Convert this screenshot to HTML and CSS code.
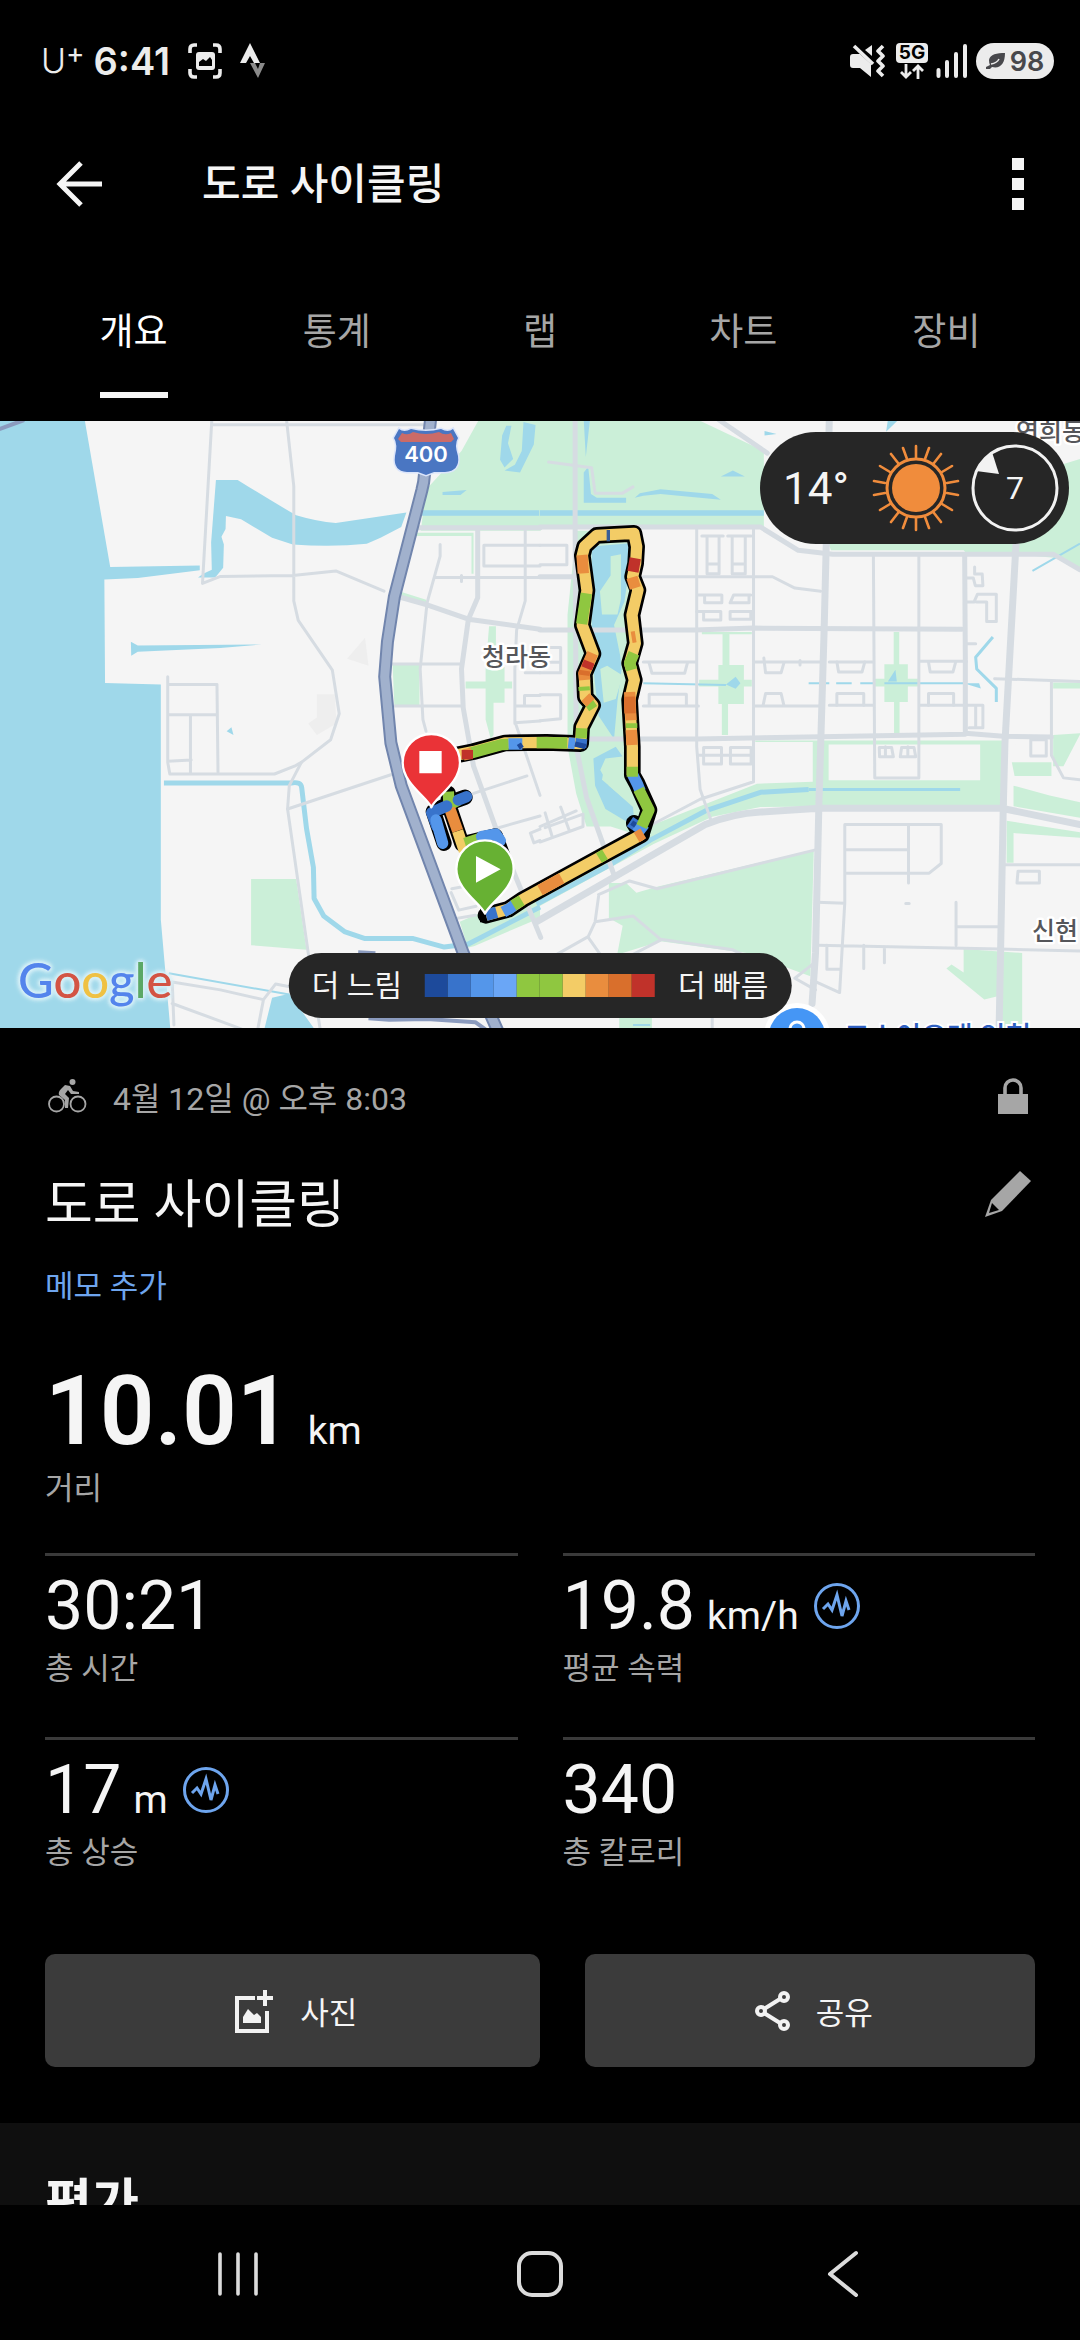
FILE: index.html
```html
<!DOCTYPE html>
<html lang="ko">
<head>
<meta charset="utf-8">
<meta name="viewport" content="width=device-width, initial-scale=1">
<title>도로 사이클링</title>
<link rel="stylesheet" href="styles.css">
</head>
<body>
<div class="screen">
  <div class="status">
    <div class="status-left">
      <span class="carrier">U<span class="carrier-plus">+</span></span>
      <span class="clock">6:41</span>
      <svg class="icon-capture" width="34" height="36" viewBox="0 0 34 36" fill="none">
        <path d="M2 10V6q0-4 4-4h3M25 2h3q4 0 4 4v4M32 26v4q0 4-4 4h-3M9 34H6q-4 0-4-4v-4" stroke="#ececec" stroke-width="3.6"/>
        <rect x="8" y="9" width="19" height="18" rx="3" fill="#ececec"/>
        <path d="M11 23v-4l4-3 3 2 4-4 2 3v6z" fill="#000"/>
      </svg>
      <svg width="26" height="36" viewBox="0 0 26 36">
        <path d="M10 0 20 20h-6l-4-7-4 7H0z" fill="#ececec"/>
        <path d="M10 20h5l3 6 2-6h5l-7 15z" fill="#8a8a8a"/>
      </svg>
    </div>
    <div class="status-right">
      <svg width="36" height="34" viewBox="0 0 36 34">
        <path d="M1 13q0-3 3-3h7l11 10v13L11 24H4q-3 0-3-3z" fill="#ececec"/>
        <path d="M16 6l7-5v11z" fill="#ececec"/>
        <path d="M5 2 24 20" stroke="#ececec" stroke-width="3.6"/>
        <path d="M34 2l-5 5 5 5-5 5 5 5-5 5 5 5" fill="none" stroke="#ececec" stroke-width="3.6" stroke-linejoin="round"/>
      </svg>
      <div class="network">
        <span class="network-type">5G</span>
        <svg width="24" height="15" viewBox="0 0 24 15" fill="none" stroke="#ececec" stroke-width="2.8">
          <path d="M6 0v13M1 8l5 5 5-5M18 15V2M13 7l5-5 5 5"/>
        </svg>
      </div>
      <svg width="32" height="36" viewBox="0 0 32 36" stroke="#ececec" stroke-width="4" stroke-linecap="round">
        <path d="M2.500 27v6M11 19v14M20 11v22M29 3v30"/>
      </svg>
      <div class="battery">
        <svg width="20" height="17" viewBox="0 0 20 17"><path d="M19 0C11 0 4 1 3 7q0 3 1 5l-4 2v2h4l2-2c8 2 13-3 13-14z" fill="#48484c"/><path d="M5 11q6-1 8-5" stroke="#ececec" stroke-width="1.500" fill="none"/></svg>
        <span>98</span>
      </div>
    </div>
  </div>

  <header class="appbar">
    <button class="icon-button" aria-label="뒤로">
      <svg width="48" height="48" viewBox="0 0 48 48" fill="none" stroke="#f5f5f5" stroke-width="5"><path d="M25 3 4 24l21 21M4 24h42"/></svg>
    </button>
    <h1 class="appbar-title">도로 사이클링</h1>
    <button class="icon-button" aria-label="더보기">
      <svg width="12" height="52" viewBox="0 0 12 52" fill="#f5f5f5"><path d="M0 0h12v12H0zM0 20h12v12H0zM0 40h12v12H0z"/></svg>
    </button>
  </header>

  <nav class="tabs">
    <a class="tab tab-active" href="#overview"><span>개요</span></a>
    <a class="tab" href="#stats"><span>통계</span></a>
    <a class="tab" href="#laps"><span>랩</span></a>
    <a class="tab" href="#charts"><span>차트</span></a>
    <a class="tab" href="#gear"><span>장비</span></a>
  </nav>

  <main class="content" id="overview">
    <section class="map">
      <svg class="map-canvas" viewBox="0 0 1080 607" preserveAspectRatio="xMidYMid slice">
        <defs>
          <path id="drop" d="M0 134C-12 104-86 62-86 0A86 86 0 1 1 86 0C86 62 12 104 0 134Z"/>
        </defs>
        <rect width="1080" height="607" fill="#f5f5f5"/>

        <!-- west side: parks and water -->
        <g transform="translate(0 -1) scale(.3444 .389)">
          <g class="park">
            <path d="M1390 0h180v285h-348l14-105 104-100z"/>
            <path d="M729 1180h131l30 182-161-12zM1140 630h78v105h-73zM1352 672h58V640l10-110h20v105h25v37h22v18h-22v37h-32v83l-8 10-15-50v-80h-58z"/>
            <path d="M1335 1290 1568 1200v80l-190 72-20 5z"/>
            <path d="M1200 290h175v105h-6v-97h-160l-50 142 78 22v8l-90-18z"/>
          </g>
          <g class="water">
            <path d="M0 0h246l74 378 260-4v12l-180 20-97 4 2 266 162 4v605l28 285H0z"/>
            <path d="M627 154h63q90 50 170 91 60 16 115 20l205-27-15 37-60 28-40 15q-100 10-215 2l-60-17-90-48-44-8-1 33-12 20 7 20-2 60-23 25h-50l15-10 25-10-2-70z"/>
            <path d="M380 570l20 10 360-3-120 9-240 10-19 10zM658 800l14-10 6 20zM790 1485l50-10 75 93H767z"/>
            <path d="M1225 232h345v14h-345zM1470 15h15l-10 45 15 40-25 22-13-20 6-62zM1520 5l35 8-5 50-40 72-45-5 30-15 20-35zM1285 185l70-5-18 13h-52z"/>
          </g>
          <g fill="#eeeeee"><path d="M1060 560l10 72-62-18zM920 705h52l5 75-57 30-25-30 25-15z"/></g>
          <path class="canal w4" d="M476 933h370q28-4 30 12l14 105 20 100 2 80 28 45 60 40 60 18h140l90 22 70-8 208-95"/>
          <path class="canal w2" d="M490 1422l350 55"/>
        </g>

        <!-- east side: parks and water -->
        <g transform="translate(540 -1) scale(.3444 .389)">
          <g class="park">
            <path d="M-2 0h462l190 80v195l-652-5zM830 300 1568 100v290l-68-35-120-10h-140l-10-10H845z"/>
            <path d="M105 285h180v45l-20 300v290l60 100-30 50-90-25-70 0-30-85-25-120V500z"/>
            <path d="M330 1040 630 935l162-5V828H625v-4h730v166l-715 5-140 25-170 70L-2 1250v-30z"/>
            <path d="M200 1190h50l30 25 60-15 455-95-10 325-185-60-250-30-110 30h-15l15-70-40-20z"/>
            <path d="M1370 880h115v35h-107zM1375 940l105 25 90 18v40l-195-30zM1490 810l80-5-50 85h-30zM1355 1030l213 30v14l-193-12v76h-20zM1490 675h80v15h-80z"/>
            <path d="M1180 1410l15-10 35 20v-60l170 10v200h-65v-90l-45 10zM230 1480h95v90h-95z"/>
            <path d="M530 548h20v82h42v100h-46v80h-18v-80h-10V630h12zM462 668h153v17H462zM470 545h145v6H470zM1027 545h16v83h25v97h-24v80h-16v-80h-28v-97h27zM970 665h130v20H970z"/>
          </g>
          <g fill="#f5f5f5"><path d="M628 834h160v92H628zM838 834h440v92H838zM1380 825h105v54h-105z"/></g>
          <g class="water">
            <path d="M0 232h650v14H0zM127 0h18l-12 95zM127 135l13-15 8 70 17 10h85v13H127zM275 200l15-12 60-10 150 12 25 15-175-15-50 5zM385 65l45 5zM525 145l35-15 35 15zM510 45l35 12zM652 28l35 8-35 4zM1010 0h30l-35 30z"/>
            <path d="M150 325l110-8-5 90-10 60-30 60 18 80 4 35-12 80-10 98-45-60-5-40-15-120z"/>
            <path d="M155 870l65-30 20 25-50 5-15 30 25 40 70 55 5 50-85-45-30-60z"/>
            <path d="M540 680l28-20 14 17-14 14zM1010 672l22-30 4 30zM1230 677l45 0 5 13z"/>
          </g>
          <g class="park"><path d="M205 350l30-5v115l-10 40-45 0-6-60 31-40zM175 640l20-8 45 25-20 60-35 10zM190 875l50-10 20 60-20 45-60-45z"/></g>
          <path class="canal w4" d="M-10 1245 210 1140 320 1080 480 1005 640 957 780 950"/>
          <path class="canal w3" d="M780 950h390l50 0"/>
          <path class="canal w2" d="M300 677l240 4M780 677h60M860 677h45M930 677h40M1000 677h230M1568 318l-138 70M270 1555h50"/>
          <path class="canal w3" d="M1315 558l-50 52 3 30 57 50v35"/>
        </g>

        <!-- streets -->
        <g class="road w3" transform="translate(0 -1) scale(.3444 .389)">
          <path d="M615 0l-27 420 52-18 210-2 125-12 140 52M832 0l21 170v295l13 50 99 128 20 112-25 67-85 58-35 60-5 60 60 370 35 198M615 12h620"/>
          <path d="M487 660v220l6 30h304l58-20 20-10M487 680h143l3 225M487 758h143M553 758v152M487 877l68-3M835 1000l300-88M500 1445l140 20 125 25 35-40 60 10M500 1500l200 65M500 1445l5 110M765 1490l-17 78"/>
          <path d="M1278 320v30l-38 120-20 170 8 130 9 30M1525 277v188l-25 75-5 100v140M1265 405h303M1568 322h-163v53h163M1137 627h203M1145 735h195M1375 960l155-45M1495 775l73 190M1440 1050l128-32M1340 400v15M1523 730v-22h45M1495 735h73M1495 778l73-4M1525 650h43M1312 1205l60-10M1310 1215l22 45 50-10M1300 1285l80-12M1540 1062l28-10M1540 1062l10 25 18-6"/>
        </g>
        <g class="road w4" transform="translate(0 -1) scale(.3444 .389)">
          <path d="M1205 277h363M1160 455l80 20 120 37 208 26M1387 277v180l-27 55-20 128 5 100 30 150 65 160 60 130 70 150"/>
        </g>
        <g class="road w3" transform="translate(540 -1) scale(.3444 .389)">
          <path d="M455 275v565l10 110 30 75M620 275v655l-155 45-150 70M968 345l4 575h128V345M300 403h375l65 29 75 8M620 622h195M840 622h130M1100 620h138M300 735h160M620 735h195M840 733h130M1100 733h135M300 622h155"/>
          <path d="M317 625l8 26h95l8-26M317 733v-28h108v28M650 612l5 38h45l8-25M648 733l7-30h45l8 30M862 622l5 26h68l8-26M862 733v-30h78v30M1128 622l5 26h66l8-26M1128 733v-30h73v30M755 630v-12"/>
          <path d="M470 298h62M545 298h68M485 300v95h35v-95M558 300v95h38v-95M487 370h32M560 370h34M460 450h68v20h-50v-20M612 450h-50l-10 20h55v-20M455 492h70v22h-50v-20M620 492h-68v20h60v-20M475 842h52v42h-52zM553 842h60v42h-60zM458 862h160M985 842h36l5 24h-40zM1050 842h36l5 24h-45zM1003 840v26M1068 840v26"/>
          <path d="M1262 378v18h22l2 30h-22l-6-20h-18M1240 468h20l10-20h55v70h-28v-50h-30M1235 575h30M1240 733h46v58h-40M1265 735v52M1425 822h45v42h-45zM1320 665l248 7M1485 672v190l35 58 48 5M1350 1143h218M1388 1160h62v30h-65z"/>
          <path d="M885 1040h280v100l-35 25H885zv200l-15 232-80-32M885 1105h185M1070 1040v150M805 1240l80 2M805 1350l530 10 233 5M1208 1240v110M1208 1303h130M940 1350v60M1000 1355v40M833 1350v62h38M790 1400l-50 35 60 30M1062 1243h10"/>
          <path d="M170 1220l90-35 80 20 460-100M170 1225l-10 65-20 38-140 70M140 1330l40 50M160 1290l110-15 80 60 210 27 80 35-110 40M350 1337l-120 55M0 1085l125-40v-32l-110 35M0 1045l105-40M15 1010l20 60M60 995l25 60M25 108l125 15 10 65h80l30-16M0 322h78v50H0M0 585h60v65H0M0 706h60v62l-60 5M0 623h60M500 1480v90"/>
        </g>
        <g class="road w4" transform="translate(540 -1) scale(.3444 .389)">
          <path d="M0 275h640l110 60 100 10h640l78 40M102 0v275l3 565 30 130 80 200M0 540l450 0 170-5 605 3M0 820h455l780-12V620l-2-275M1235 805l110 8 140 2M520 0l140 85M0 403h105"/>
        </g>
        <g class="road w7" transform="translate(540 -1) scale(.3444 .389)">
          <path d="M840 0l-15 540-15 440-10 390-10 130M1382 320l-32 510-5 170-5 240-7 328M-10 1290 480 1040q80-28 160-32l170-10h530l228 42"/>
        </g>

        <!-- expressway -->
        <g transform="translate(0 -1) scale(.3444 .389)" class="express">
          <path class="edge" d="M1250 0l-20 160-5 20-80 275-20 115-8 90 18 170 30 110 180 430 100 200"/>
          <path class="fill" d="M1250 0l-20 160-5 20-80 275-20 115-8 90 18 170 30 110 180 430 100 200"/>
          <path class="thin" d="M-10 26 70 0M1070 1538l60 4 110-2 140 8 35 22M1040 1368l50 3"/>
        </g>

        <!-- route shield -->
        <path d="M399 8q5 4 12 0 15 4 30 0 7 4 12 0l5 9q-4 6 0 18 2 15-13 16l-11 0-8 3-8-3h-11q-14-1-12-16 3-12-1-18z" fill="#4a76c2" stroke="#dbe5fb" stroke-width="3" paint-order="stroke"/>
        <path d="M402 12q6 3 11-1 13 4 26 0 6 4 12 1l3 6-3 3h-50l-3-3z" fill="#cb6b68"/>
        <text class="shield-text" x="426" y="41">400</text>
        <text class="place" x="482" y="245">청라동</text>
        <text class="place" x="1032" y="519">신현</text>
        <text class="place" x="1016" y="20">연희동</text>

        <circle cx="797" cy="615" r="33" fill="#fff"/>
        <circle cx="797" cy="615" r="28" fill="#4596f5"/>
        <path d="M790 612v-4a7 7 0 0 1 14 0v4" fill="none" stroke="#fff" stroke-width="3"/>
        <text class="poi" x="844" y="626">코스이오래 인천</text>

        <!-- ridden track, coloured by speed -->
        <g transform="translate(380 79) scale(.3333)" fill="none" stroke-linejoin="round">
          <g stroke="#000" stroke-width="50" stroke-linecap="round">
            <path d="M318 1246l67-18 45-30 230-126 125-68-22-34M785 1000l22-70-36-80-14-25v-85l-8-140 14-60-14-50 17-60-10-85 18-75-16-40 9-40 3-50-8-40-72 4-40 2-36 33-7 27 14 105-14 105 32 85-26 60 3 70 22 25-33 65-3 50-102-4-125 2-95 26-60 12"/>
            <path d="M205 880l0 30 50-18M210 910l-50 25 32 95M208 920l38 112 100-24 30 80" stroke-width="46"/>
          </g>
          <path d="M300 1245l20 0" stroke="#000" stroke-width="44"/>
          <g stroke-width="34">
            <path stroke="#f3cc66" d="M318 1246l67-18 45-30 230-126 125-68M757 825v-85l-8-140 14-60-14-50 17-60-10-85 18-75-16-40 9-40 3-50-8-40-72 4-40 2-36 33-7 27 14 105-14 105 32 85-26 60 3 70 22 25-33 65-3 50-102-4-125 2-95 26-60 12"/>
            <path stroke="#3873cb" d="M318 1246l32-9M602 742l3-26M750 965l24 16"/>
            <path stroke="#5496ea" d="M370 1236l22-12 12-10M768 975l28 22M757 822l16 32 8 20M565 729l20 2M385 732l42 0"/>
            <path stroke="#1d4a9b" d="M585 732l32 8M755 968l12 8M415 742l12-8" stroke-width="16"/>
            <path stroke="#3a5f96" d="M680 107l10 0"/>
            <path stroke="#8fc740" d="M400 1216l25-15M657 1074l18-11M776 868l31 62-22 50M757 830v-30M762 460l-13 30 6 20M755 684l0-14M619 280l-14 92M612 560l1 12M618 620l24-16M604 715l1-30M562 729l-62-1-30 0M270 760l95-26 20-1"/>
            <path stroke="#e98d3e" d="M480 1171l65-36M770 1012l20-12M754 690l2 45M749 576l4 85M755 412l12-2M756 232l10 32M606 165l4 55M638 460l-26 60 2 20M616 592l16 16M275 760l-25 5"/>
            <path stroke="#d96f2c" d="M749 590l1 50M614 512l-2 14"/>
            <path stroke="#c0322a" d="M766 175l-7 40M628 485l-8 20M262 750v28"/>
            <path stroke="#8fc740" d="M205 875l2 40 28-14"/>
            <path stroke="#e98d3e" d="M209 925l24 68"/>
            <path stroke="#f3cc66" d="M233 993l20 60"/>
            <path stroke="#8fc740" d="M255 1030l50-16"/>
            <path stroke="#3873cb" d="M235 900l25-10M200 918l-45 20 15 40" stroke-linecap="round"/>
            <path stroke="#5496ea" d="M168 960l20 70M305 1010l42-8 14 20" stroke-linecap="round"/>
          </g>
          <g stroke="#fff" stroke-width="7">
            <use href="#drop" x="154" y="788" fill="#ea3337"/>
            <use href="#drop" x="315" y="1107" fill="#67b133"/>
          </g>
          <path d="M118 753h67v67h-67zM288 1068l74 40-74 40z" fill="#fff"/>
        </g>
      </svg>

      <div class="weather">
        <span class="temperature">14°</span>
        <svg width="88" height="88" viewBox="-44 -44 88 88">
          <path d="M0-42V-30M0 42V30M13-40 9-29M-13-40-9-29M13 40 9 29M-13 40-9 29M25-34 18-25M-25-34-18-25M25 34 18 25M-25 34-18 25M36-22 26-16M-36-22-26-16M36 22 26 16M-36 22-26 16M42-7 31-5M-42-7-31-5M42 7 31 5M-42 7-31 5" stroke="#f08c3c" stroke-width="2.600" stroke-linecap="round"/>
          <circle r="29" fill="none" stroke="#f08c3c" stroke-width="3"/>
          <circle r="24" fill="#f08c3c"/>
        </svg>
        <div class="wind">
          <svg width="90" height="90" viewBox="-45 -45 90 90">
            <circle r="42" fill="none" stroke="#f2f2f2" stroke-width="3"/>
            <path d="M-39-17Q-34-28-23-36L-16-14Z" fill="#f2f2f2"/>
          </svg>
          <span class="wind-speed">7</span>
        </div>
      </div>

      <div class="google" aria-label="Google"><span class="g-blue">G</span><span class="g-red">o</span><span class="g-yellow">o</span><span class="g-blue">g</span><span class="g-green">l</span><span class="g-red">e</span></div>

      <div class="legend">
        <span>더 느림</span>
        <div class="scale">
          <i class="s1"></i><i class="s2"></i><i class="s3"></i><i class="s4"></i><i class="s5"></i><i class="s5"></i><i class="s6"></i><i class="s7"></i><i class="s8"></i><i class="s9"></i>
        </div>
        <span>더 빠름</span>
      </div>
    </section>

    <section class="summary">
      <div class="meta">
        <svg width="40" height="36" viewBox="0 0 40 36" fill="none">
          <g stroke="#a6a6a6" stroke-width="1.800"><circle cx="9.500" cy="26" r="7.500"/><circle cx="31" cy="26" r="7.500"/></g>
          <circle cx="25.500" cy="4" r="3" fill="#a6a6a6"/>
          <path d="M18 7l5 1 3 5 6 1v2h-8l-3-4-3 4 4 4-1 10h-3l0-8-6-5q-1-3 2-6z" fill="#a6a6a6"/>
        </svg>
        <span class="date">4월 12일 @ 오후 8:03</span>
        <svg width="30" height="38" viewBox="0 0 30 38"><path d="M7 18V11a8 8 0 0 1 16 0v7" fill="none" stroke="#a6a6a6" stroke-width="3.600"/><path d="M0 17h30v20H0z" fill="#a6a6a6"/></svg>
      </div>
      <div class="title-row">
        <h2 class="title">도로 사이클링</h2>
        <button class="edit" aria-label="편집">
          <svg width="46" height="46" viewBox="0 0 46 46"><path d="M35 0 46 10 17 40 0 46 6 29Z" fill="#a6a6a6"/><path d="M7 32 14 39 4 42Z" fill="#000"/></svg>
        </button>
      </div>
      <a class="memo" href="#memo">메모 추가</a>

      <div class="distance"><span class="distance-value">10.01</span><span class="unit">km</span></div>
      <div class="label">거리</div>

      <div class="stats">
        <div class="stat">
          <div class="figure"><span class="value">30:21</span></div>
          <div class="label">총 시간</div>
        </div>
        <div class="stat">
          <div class="figure"><span class="value">19.8</span><span class="unit">km/h</span>
            <button class="wave" aria-label="평균 속력 차트"><svg width="48" height="48" viewBox="-24 -24 48 48" fill="none" stroke="#6ea5ee" stroke-width="3"><circle r="21.500"/><path d="M-14 3-9-2-5 4 0-11 5 10 9-5 12 4"/></svg></button>
          </div>
          <div class="label">평균 속력</div>
        </div>
        <div class="stat">
          <div class="figure"><span class="value">17</span><span class="unit">m</span>
            <button class="wave" aria-label="총 상승 차트"><svg width="48" height="48" viewBox="-24 -24 48 48" fill="none" stroke="#6ea5ee" stroke-width="3"><circle r="21.500"/><path d="M-14 3-9-2-5 4 0-11 5 10 9-5 12 4"/></svg></button>
          </div>
          <div class="label">총 상승</div>
        </div>
        <div class="stat">
          <div class="figure"><span class="value">340</span></div>
          <div class="label">총 칼로리</div>
        </div>
      </div>

      <div class="actions">
        <button class="action action-photo">
          <svg width="40" height="44" viewBox="0 0 40 44"><path d="M20 9H2v33h30V22" fill="none" stroke="#f2f2f2" stroke-width="4"/><path d="M30 1v16M22 9h16" stroke="#f2f2f2" stroke-width="4"/><path d="M8 34v-6l5-8 6 6 3-2 4 4v6z" fill="#f2f2f2"/></svg>
          <span>사진</span>
        </button>
        <button class="action action-share">
          <svg width="36" height="44" viewBox="0 0 36 44" fill="none" stroke="#f2f2f2" stroke-width="4"><circle cx="6" cy="22" r="4"/><circle cx="29" cy="8" r="4"/><circle cx="29" cy="36" r="4"/><path d="M9 20 25 10M9 24l16 10"/></svg>
          <span>공유</span>
        </button>
      </div>
    </section>

    <section class="rating">
      <h2 class="rating-title">평가</h2>
    </section>
  </main>

  <div class="system-nav">
    <button aria-label="최근 앱"><svg width="46" height="46" viewBox="0 0 46 46" stroke="#dcdcdc" stroke-width="3.600" stroke-linecap="round"><path d="M4 3v40M22 3v40M40 3v40"/></svg></button>
    <button aria-label="홈"><svg width="46" height="46" viewBox="0 0 46 46"><rect x="2" y="2" width="42" height="42" rx="13" fill="none" stroke="#dcdcdc" stroke-width="4"/></svg></button>
    <button aria-label="이전"><svg width="46" height="48" viewBox="0 0 46 48" fill="none" stroke="#dcdcdc" stroke-width="4" stroke-linecap="round" stroke-linejoin="round"><path d="M38 3 12 24l26 21"/></svg></button>
  </div>
</div>
</body>
</html>
```
FILE: styles.css
```css
* {
  box-sizing: border-box;
}

body {
  margin: 0;
  background: #000;
  color: #f5f5f5;
  font-family: Roboto, "Noto Sans CJK KR", sans-serif;
}

h1,
h2 {
  margin: 0;
}

button {
  padding: 0;
  border: 0;
  background: none;
  color: inherit;
  font: inherit;
}

a {
  color: inherit;
  text-decoration: none;
}

svg {
  display: block;
  flex: none;
}

.screen {
  display: flex;
  flex-direction: column;
  height: 100vh;
}

/* status bar */

.status {
  display: flex;
  flex: none;
  justify-content: space-between;
  align-items: center;
  height: 122px;
  padding: 0 26px 0 41px;
  color: #ececec;
  font-family: Inter, sans-serif;
}

.status-left,
.status-right {
  display: flex;
  align-items: center;
}

.carrier {
  display: flex;
  font-size: 34px;
  font-weight: 300;
  line-height: 40px;
}

.carrier-plus {
  font-size: 28px;
  font-weight: 400;
  line-height: 24px;
}

.clock {
  margin-left: 9px;
  font-size: 38px;
  font-weight: 600;
  line-height: 40px;
}

.icon-capture {
  margin: 0 18px;
}

.status-right {
  gap: 8px;
}

.network {
  display: flex;
  flex-direction: column;
  align-items: center;
  gap: 1px;
  margin-left: 3px;
}

.network-type {
  width: 32px;
  border-radius: 4px;
  background: #ececec;
  color: #000;
  font-size: 19px;
  font-weight: 700;
  line-height: 20px;
  text-align: center;
}

.battery {
  display: flex;
  align-items: center;
  justify-content: center;
  gap: 4px;
  width: 78px;
  height: 36px;
  border-radius: 18px;
  background: #ececec;
  color: #48484c;
  font-size: 27px;
  font-weight: 600;
}

/* app bar */

.appbar {
  display: flex;
  flex: none;
  align-items: center;
  height: 124px;
  padding: 0 56px;
}

.appbar-title {
  flex: 1;
  margin-left: 98px;
  padding-top: 2px;
  font-size: 42px;
  font-weight: 500;
  line-height: 60px;
}

/* tabs */

.tabs {
  display: flex;
  flex: none;
  height: 175px;
  padding: 0 32px 23px;
}

.tab {
  display: flex;
  flex: 1;
  justify-content: center;
  color: #a6a6a6;
  font-size: 37px;
  line-height: 50px;
}

.tab span {
  padding-top: 62px;
  border-bottom: 6px solid transparent;
}

.tab-active {
  color: #fff;
}

.tab-active span {
  border-bottom-color: #f5f5f5;
}

.content {
  flex: 1;
  min-height: 0;
  overflow-y: auto;
  scrollbar-width: none;
}

/* map */

.map {
  position: relative;
  height: 607px;
  overflow: hidden;
}

.map-canvas {
  width: 100%;
  height: 100%;
}

.park {
  fill: #cbefd8;
}

.water {
  fill: #9fd8ea;
}

.map-canvas .canal,
.map-canvas .road path,
.map-canvas .express path {
  fill: none;
  stroke-linejoin: round;
  vector-effect: non-scaling-stroke;
}

.canal {
  stroke: #9fd8ea;
}

.road {
  stroke: #d6dce2;
  stroke-linecap: round;
}

.w2 {
  stroke-width: 2px;
}

.w3 {
  stroke-width: 3px;
}

.w4 {
  stroke-width: 5px;
}

.w7 {
  stroke-width: 7px;
}

.edge {
  stroke: #7185ad;
  stroke-width: 13px;
}

.fill {
  stroke: #a1b1cd;
  stroke-width: 9px;
}

.thin {
  stroke: #8b9bbe;
  stroke-width: 4px;
}

.shield-text {
  fill: #fff;
  font-family: Inter, sans-serif;
  font-size: 22px;
  font-weight: 600;
  text-anchor: middle;
}

.place {
  fill: #55565a;
  stroke: #fff;
  stroke-width: 5px;
  stroke-linejoin: round;
  paint-order: stroke;
  font-size: 25px;
  font-weight: 500;
}

.poi {
  fill: #2f5fc0;
  stroke: #fff;
  stroke-width: 4px;
  paint-order: stroke;
  font-size: 28px;
  font-weight: 500;
}

.weather {
  position: absolute;
  top: 11px;
  right: 11px;
  display: flex;
  align-items: center;
  gap: 10px;
  height: 112px;
  padding: 0 9px 0 23px;
  border-radius: 56px;
  background: #262626;
}

.temperature {
  width: 79px;
  padding-top: 2px;
  font-size: 44px;
  line-height: 52px;
}

.wind {
  display: grid;
  place-items: center;
}

.wind > * {
  grid-area: 1 / 1;
}

.wind-speed {
  font-size: 32px;
}

.google {
  position: absolute;
  left: 18px;
  bottom: 19px;
  font-family: Lato, sans-serif;
  font-size: 49px;
  font-weight: 500;
  line-height: 60px;
  filter: drop-shadow(0 0 2px #d8f0f7) drop-shadow(0 0 2px #d8f0f7) drop-shadow(0 0 1px #d8f0f7);
}

.g-blue {
  color: #5484ec;
}

.g-red {
  color: #d35444;
}

.g-yellow {
  color: #efc143;
}

.g-green {
  color: #5ba866;
}

.legend {
  position: absolute;
  bottom: 10px;
  left: 50%;
  display: flex;
  align-items: center;
  gap: 23px;
  height: 65px;
  padding: 0 23px;
  border-radius: 33px;
  background: #262626;
  font-size: 30px;
  line-height: 40px;
  white-space: nowrap;
  transform: translateX(-50%);
}

.scale {
  display: flex;
}

.scale i {
  width: 23px;
  height: 23px;
}

.s1 { background: #1d4a9b; }
.s2 { background: #3873cb; }
.s3 { background: #5496ea; }
.s4 { background: #6aa6f6; }
.s5 { background: #8fc740; }
.s6 { background: #f3cc66; }
.s7 { background: #e98d3e; }
.s8 { background: #d96f2c; }
.s9 { background: #c0322a; }

/* summary */

.summary {
  padding: 43px 45px 56px;
}

.meta {
  display: flex;
  align-items: center;
  height: 50px;
  padding: 0 7px 0 2px;
}

.date {
  flex: 1;
  margin-left: 26px;
  color: #a6a6a6;
  font-size: 32px;
}

.title-row {
  display: flex;
  justify-content: space-between;
  align-items: flex-start;
  margin-top: 48px;
}

.title {
  font-size: 52px;
  font-weight: 400;
  line-height: 74px;
}

.edit {
  margin: 2px 4px 0 0;
}

.memo {
  display: block;
  margin-top: 22px;
  color: #6ea5ee;
  font-size: 31px;
  line-height: 44px;
}

.distance {
  display: flex;
  align-items: baseline;
  gap: 16px;
  margin-top: 46px;
  line-height: 44px;
}

.distance-value {
  font-size: 96px;
  font-weight: 600;
  line-height: 112px;
}

.unit {
  font-size: 39px;
}

.label {
  color: #a6a6a6;
  font-size: 31px;
  line-height: 44px;
}

.stats {
  display: grid;
  grid-template-columns: 1fr 1fr;
  gap: 46px 45px;
  margin-top: 42px;
}

.stat {
  border-top: 3px solid #3a3a3a;
}

.figure {
  display: flex;
  align-items: baseline;
  gap: 12px;
  height: 91px;
  line-height: 100px;
}

.value {
  font-size: 68px;
}

.wave {
  align-self: flex-start;
  margin: 26px 0 0 2px;
}

.actions {
  display: flex;
  gap: 45px;
  margin-top: 79px;
}

.action {
  display: flex;
  justify-content: center;
  align-items: center;
  gap: 25px;
  height: 113px;
  padding-left: 8px;
  border-radius: 10px;
  background: #3b3b3b;
  font-size: 31px;
}

.action-photo {
  flex: 11;
}

.action-share {
  flex: 10;
}

.rating {
  padding: 44px 45px;
  background: #0f0f0f;
}

.rating-title {
  font-size: 51px;
  font-weight: 700;
  line-height: 74px;
}

/* system navigation */

.system-nav {
  display: grid;
  flex: none;
  grid-template-columns: repeat(3, 1fr);
  height: 135px;
  padding: 3px 88px 0;
  background: #010101;
}

.system-nav button {
  display: grid;
  place-items: center;
}
```
